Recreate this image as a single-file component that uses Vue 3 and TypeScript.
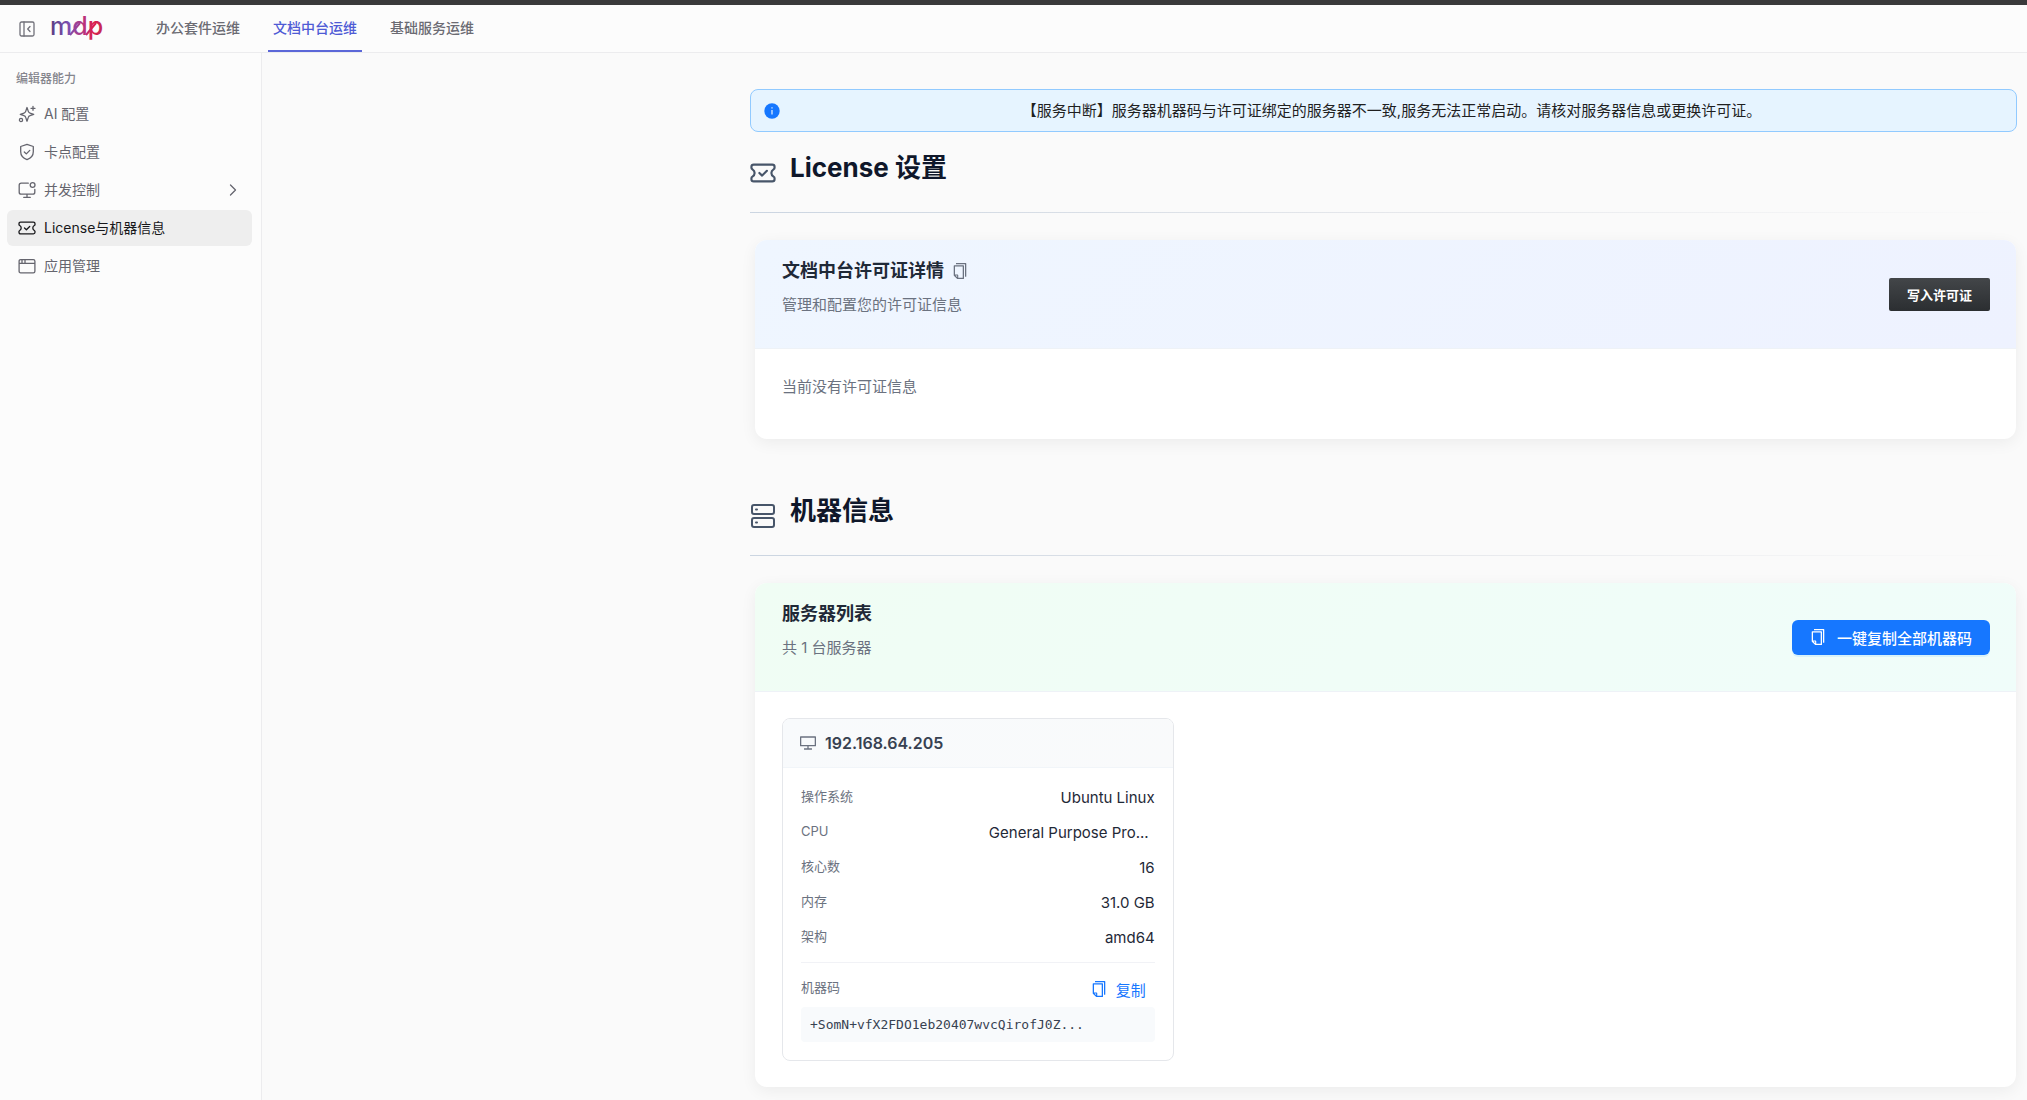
<script setup lang="ts">
import { ref } from 'vue'

interface MenuItem {
  label: string
  icon: string
  expandable?: boolean
}

interface SpecRow {
  label: string
  value: string
  truncated?: boolean
}

const tabs: string[] = ['办公套件运维', '文档中台运维', '基础服务运维']
const activeTab = ref<string>('文档中台运维')

const menu: MenuItem[] = [
  { label: 'AI 配置', icon: 'sparkle' },
  { label: '卡点配置', icon: 'shield' },
  { label: '并发控制', icon: 'monitor', expandable: true },
  { label: 'License与机器信息', icon: 'ticket' },
  { label: '应用管理', icon: 'window' },
]
const activeMenu = ref<string>('License与机器信息')

const server = {
  ip: '192.168.64.205',
  code: '+SomN+vfX2FDO1eb20407wvcQirofJ0Z...',
}

const specs: SpecRow[] = [
  { label: '操作系统', value: 'Ubuntu Linux' },
  { label: 'CPU', value: 'General Purpose Pro...', truncated: true },
  { label: '核心数', value: '16' },
  { label: '内存', value: '31.0 GB' },
  { label: '架构', value: 'amd64' },
]
</script>

<template>
  <div class="app">
    <svg class="sprite" aria-hidden="true">
      <symbol id="i-copy" viewBox="64 64 896 896">
        <path fill="currentColor" d="M832 64H296c-4.4 0-8 3.6-8 8v56c0 4.4 3.6 8 8 8h496v688c0 4.4 3.6 8 8 8h56c4.4 0 8-3.6 8-8V96c0-17.7-14.3-32-32-32zM704 192H192c-17.7 0-32 14.3-32 32v530.7c0 8.5 3.4 16.6 9.4 22.6l173.3 173.3c2.2 2.2 4.7 4 7.4 5.5v1.9h4.2c3.5 1.3 7.2 2 11 2H704c17.7 0 32-14.3 32-32V224c0-17.7-14.3-32-32-32zM350 856.2L263.9 770H350v86.2zM664 888H414V746c0-22.1-17.9-40-40-40H232V264h432v624z" />
      </symbol>
      <symbol id="i-desktop" viewBox="64 64 896 896">
        <path fill="currentColor" d="M928 140H96c-17.7 0-32 14.3-32 32v496c0 17.7 14.3 32 32 32h380v112H304c-8.8 0-16 7.2-16 16v48c0 4.4 3.6 8 8 8h432c4.4 0 8-3.6 8-8v-48c0-8.8-7.2-16-16-16H548V700h380c17.7 0 32-14.3 32-32V172c0-17.7-14.3-32-32-32zm-40 488H136V212h752v416z" />
      </symbol>
      <symbol id="i-sparkle" viewBox="0 0 18 18">
        <path d="M9 2.5 10.3 6.4q.4 1.3 1.7 1.7L15.7 9.4 12 10.7q-1.3.4-1.7 1.7L9 16.2 7.700 12.400q-.4-1.300-1.700-1.700L2.300 9.400 6 8.100q1.300-.4 1.700-1.700zM15 1.300v4M13 3.300h4" />
        <circle cx="3" cy="15" r="1.600" />
      </symbol>
      <symbol id="i-shield" viewBox="0 0 18 18">
        <path d="M9 1.300 15.300 3.500v5.200c0 4-2.500 6.500-6.300 8-3.800-1.500-6.300-4-6.300-8V3.500zM6.300 9l2 1.900 3.500-3.500" />
      </symbol>
      <symbol id="i-monitor" viewBox="0 0 18 18">
        <path d="M10.300 2.200H3.200q-2 0-2 2v7q0 2 2 2h11.600q2 0 2-2V8.500M9 13.200v3M5.700 16.300h6.600" />
        <circle cx="14.600" cy="4" r="2.400" />
      </symbol>
      <symbol id="i-ticket" viewBox="0 0 18 18">
        <path d="M2.600 3.200h12.800q1.600 0 1.600 1.500v.7q0 .7-.7 1.100c-2 1.200-2 3.800 0 5q.7.4.7 1.100v.7q0 1.500-1.600 1.500H2.600q-1.600 0-1.600-1.500v-.7q0-.7.7-1.100c2-1.200 2-3.800 0-5Q1 6.100 1 5.400v-.7q0-1.500 1.600-1.500zM6.500 9l1.900 1.800 3.300-3.300" />
      </symbol>
      <symbol id="i-window" viewBox="0 0 18 18">
        <path d="M2.700 2.600h12.600q1.600 0 1.600 1.600v10q0 1.600-1.600 1.600H2.700q-1.600 0-1.600-1.600v-10q0-1.600 1.600-1.600zM1.100 6.300h15.800M4 2.800v3.300M7 2.800v3.300" />
      </symbol>
      <symbol id="i-server" viewBox="0 0 26 26">
        <rect x="2" y="2" width="22" height="9" rx="2" />
        <rect x="2" y="15" width="22" height="9" rx="2" />
        <path d="M6 6.500h1M6 19.500h1" />
      </symbol>
    </svg>

    <div class="topstrip"></div>
    <header class="header">
      <button class="collapse" type="button" aria-label="收起侧栏">
        <svg viewBox="0 0 16 16" class="line" width="16" height="16">
          <rect x="1" y="1" width="14" height="14" rx="1.500" />
          <path d="M5 1v14M11 5.500 8.700 8 11 10.500" />
        </svg>
      </button>
      <svg class="logo" viewBox="0 0 54 28" width="54" height="28" role="img" aria-label="mdp">
        <defs>
          <linearGradient id="brand" gradientUnits="userSpaceOnUse" x1="0" y1="0" x2="52" y2="0">
            <stop offset="0" stop-color="#5b3f86" />
            <stop offset=".34" stop-color="#7d4fb0" />
            <stop offset=".62" stop-color="#b5357f" />
            <stop offset=".82" stop-color="#dd1f4a" />
            <stop offset="1" stop-color="#c02a5c" />
          </linearGradient>
        </defs>
        <text x="-1" y="20" fill="url(#brand)" class="logo-text">mdp</text>
        <path d="M19 20 29 8M35 20 45 8" stroke="url(#brand)" stroke-width="2" fill="none" />
      </svg>
      <nav class="tabs">
        <a
          v-for="tab in tabs"
          :key="tab"
          href="#"
          class="tab"
          :class="{ active: tab === activeTab }"
          @click.prevent="activeTab = tab"
        >{{ tab }}</a>
      </nav>
    </header>

    <div class="layout">
      <aside class="sidebar">
        <p class="group">编辑器能力</p>
        <nav class="menu">
          <a
            v-for="item in menu"
            :key="item.label"
            href="#"
            class="menu-item"
            :class="{ active: item.label === activeMenu }"
            @click.prevent="activeMenu = item.label"
          >
            <svg class="line" width="18" height="18"><use :href="'#i-' + item.icon" /></svg>
            <span class="menu-label">{{ item.label }}</span>
            <svg v-if="item.expandable" class="line" viewBox="0 0 16 16" width="16" height="16">
              <path d="m5.500 3 5 5-5 5" />
            </svg>
          </a>
        </nav>
      </aside>

      <main class="main">
        <div class="content">
          <div class="alert" role="alert">
            <svg viewBox="0 0 16 16" width="16" height="16">
              <circle cx="8" cy="8" r="7.700" fill="#1677ff" />
              <path d="M8 7v4.500M8 4.300v1.200" stroke="#fff" stroke-width="1.100" />
            </svg>
            <span class="alert-text">【服务中断】服务器机器码与许可证绑定的服务器不一致,服务无法正常启动。请核对服务器信息或更换许可证。</span>
          </div>

          <section class="section">
            <div class="heading">
              <svg class="line heading-icon" width="26" height="26"><use href="#i-ticket" /></svg>
              <h1>License 设置</h1>
            </div>
            <div class="card">
              <div class="card-head blue">
                <div>
                  <h2>
                    文档中台许可证详情
                    <button class="icon-button" type="button" aria-label="复制">
                      <svg width="16" height="16"><use href="#i-copy" /></svg>
                    </button>
                  </h2>
                  <p class="sub">管理和配置您的许可证信息</p>
                </div>
                <button class="write" type="button">写入许可证</button>
              </div>
              <p class="empty">当前没有许可证信息</p>
            </div>
          </section>

          <section class="section machines">
            <div class="heading">
              <svg class="line heading-icon server-icon" width="26" height="26"><use href="#i-server" /></svg>
              <h1>机器信息</h1>
            </div>
            <div class="card">
              <div class="card-head green">
                <div>
                  <h2>服务器列表</h2>
                  <p class="sub">共 1 台服务器</p>
                </div>
                <button class="copy-all" type="button">
                  <svg width="16" height="16"><use href="#i-copy" /></svg>
                  一键复制全部机器码
                </button>
              </div>
              <div class="servers">
                <article class="server">
                  <h3>
                    <svg width="16" height="16"><use href="#i-desktop" /></svg>
                    {{ server.ip }}
                  </h3>
                  <div class="server-body">
                    <dl class="specs">
                      <div v-for="row in specs" :key="row.label" class="spec">
                        <dt>{{ row.label }}</dt>
                        <dd :class="{ truncated: row.truncated }">{{ row.value }}</dd>
                      </div>
                    </dl>
                    <div class="code-head">
                      <span>机器码</span>
                      <button class="copy" type="button">
                        <svg width="16" height="16"><use href="#i-copy" /></svg>
                        复制
                      </button>
                    </div>
                    <code>{{ server.code }}</code>
                  </div>
                </article>
              </div>
            </div>
          </section>
        </div>
      </main>
    </div>
  </div>
</template>

<style>
body {
  margin: 0;
  background: #fafafa;
}
</style>

<style scoped>
.app {
  min-height: 100vh;
  display: flex;
  flex-direction: column;
  background: #fafafa;
  color: #1f2937;
  font-family: Inter, "Noto Sans CJK SC", sans-serif;
  font-size: 15px;
}
.app *,
.app {
  box-sizing: border-box;
}
.sprite {
  position: absolute;
  width: 0;
  height: 0;
}
svg {
  flex: none;
}
h1,
h2,
h3,
p,
dl,
dd {
  margin: 0;
}
a {
  color: inherit;
  text-decoration: none;
}
button {
  border: 0;
  background: none;
  padding: 0;
  font-family: inherit;
  cursor: pointer;
}
.line {
  fill: none;
  stroke: currentColor;
  stroke-width: 1.3px;
  stroke-linecap: round;
  stroke-linejoin: round;
}
.topstrip {
  height: 5px;
  background: #3a3a3b;
}
.header {
  display: flex;
  align-items: center;
  height: 48px;
  padding-left: 19px;
  background: #fcfcfc;
  border-bottom: 1px solid #ececee;
}
.collapse {
  display: flex;
  color: #71717a;
}
.logo {
  margin-left: 16px;
  overflow: visible;
}
.logo-text {
  font: 500 25px Inter, sans-serif;
}
.tabs {
  display: flex;
  gap: 23px;
  height: 100%;
  margin-left: 46px;
}
.tab {
  display: flex;
  align-items: center;
  padding: 0 5px 2px;
  border-bottom: 2px solid transparent;
  color: #6b6b73;
  font-size: 14px;
  font-weight: 500;
}
.tab.active {
  color: #4f5bd5;
  border-bottom-color: #5b67d8;
}
.layout {
  display: flex;
  flex: 1;
}
.sidebar {
  flex: none;
  width: 262px;
  padding: 16px 9px 0 7px;
  background: #fcfcfc;
  border-right: 1px solid #ececee;
}
.group {
  padding-left: 9px;
  color: #85858d;
  font-size: 12px;
  font-weight: 500;
  line-height: 20px;
}
.menu {
  display: flex;
  flex-direction: column;
  gap: 2px;
  margin-top: 7px;
}
.menu-item {
  display: flex;
  align-items: center;
  gap: 8px;
  height: 36px;
  padding: 0 11px;
  border-radius: 6px;
  color: #65656e;
  font-size: 14px;
}
.menu-item.active {
  background: #eeeeee;
  color: #18181b;
}
.menu-label {
  flex: 1;
  padding-bottom: 2px;
}
.main {
  flex: 1;
  min-width: 0;
}
.content {
  width: 100%;
  max-width: 1277px;
  margin-left: auto;
  padding: 36px 10px 11px 0;
}
.alert {
  display: flex;
  align-items: center;
  padding: 9px 13px;
  border: 1px solid #91caff;
  border-radius: 8px;
  background: #e6f4ff;
  color: #1f1f1f;
  line-height: 23px;
}
.alert-text {
  flex: 1;
  text-align: center;
}
.heading {
  display: flex;
  gap: 14px;
  height: 81px;
  padding-top: 16px;
  border-bottom: 1px solid;
  border-image: linear-gradient(90deg, #cbd5e1, #e5e7eb 50%, transparent) 1;
}
.heading-icon {
  margin-top: 12px;
  color: #475569;
  stroke-width: 1.500px;
}
.server-icon {
  stroke-width: 2px;
}
h1 {
  color: #0f172a;
  font-size: 26px;
  font-weight: 700;
  line-height: 40px;
}
.card {
  margin: 27px 1px 0 5px;
  border-radius: 12px;
  background: #fff;
  box-shadow: 0 4px 16px rgba(0, 0, 0, 0.06);
  overflow: hidden;
}
.card-head {
  display: flex;
  align-items: center;
  justify-content: space-between;
  height: 109px;
  padding: 0 26px 0 27px;
  border-bottom: 1px solid #eef2f7;
}
.blue {
  background: linear-gradient(135deg, #eff6ff, #eef2ff);
}
.green {
  background: linear-gradient(135deg, #f0fdf4, #f0fdfa);
}
h2 {
  display: flex;
  align-items: center;
  gap: 8px;
  margin-top: -14px;
  font-size: 18px;
  font-weight: 600;
  line-height: 28px;
}
.icon-button {
  display: flex;
  color: #6b7280;
}
.sub {
  margin-top: 8px;
  color: #6b7280;
  line-height: 24px;
}
.write {
  height: 33px;
  padding: 0 18px;
  border-radius: 2px;
  background: linear-gradient(#434649, #2b2e31);
  color: #fff;
  font-size: 13px;
  font-weight: 700;
}
.empty {
  padding: 26px 27px 40px;
  color: #6b7280;
  line-height: 24px;
}
.machines {
  margin-top: 36px;
}
.copy-all {
  display: flex;
  align-items: center;
  gap: 11px;
  height: 35px;
  padding: 0 18px;
  border-radius: 6px;
  background: #1677ff;
  box-shadow: 0 2px 0 rgba(5, 145, 255, 0.1);
  color: #fff;
  font-size: 15px;
  font-weight: 500;
}
.servers {
  display: grid;
  grid-template-columns: repeat(3, minmax(0, 1fr));
  gap: 16px;
  padding: 26px 27px;
}
.server {
  border: 1px solid #e5e7eb;
  border-radius: 8px;
  overflow: hidden;
}
h3 {
  display: flex;
  align-items: center;
  gap: 9px;
  height: 49px;
  padding: 0 17px;
  background: linear-gradient(135deg, #f8fafc, #f9fafb);
  border-bottom: 1px solid #f1f5f9;
  color: #374151;
  font-size: 16px;
  font-weight: 600;
}
h3 svg {
  color: #6b7280;
}
.server-body {
  padding: 18px;
}
.specs {
  display: flex;
  flex-direction: column;
  gap: 11px;
  padding-bottom: 12px;
  border-bottom: 1px solid #f1f2f6;
}
.spec {
  display: flex;
  justify-content: space-between;
  line-height: 24px;
}
dt,
.code-head {
  color: #6b7280;
  font-size: 13px;
  line-height: 20px;
}
.truncated {
  padding-right: 6px;
}
.code-head {
  display: flex;
  align-items: center;
  justify-content: space-between;
  height: 44px;
  padding: 8px 9px 0 0;
}
.code-head span {
  padding-bottom: 4px;
}
.copy {
  display: flex;
  align-items: center;
  gap: 9px;
  color: #1677ff;
  font-size: 15px;
}
code {
  display: block;
  padding: 0 9px;
  border-radius: 4px;
  background: #f8fafc;
  color: #374151;
  font-family: "DejaVu Sans Mono", monospace;
  font-size: 13px;
  line-height: 35px;
}
</style>
